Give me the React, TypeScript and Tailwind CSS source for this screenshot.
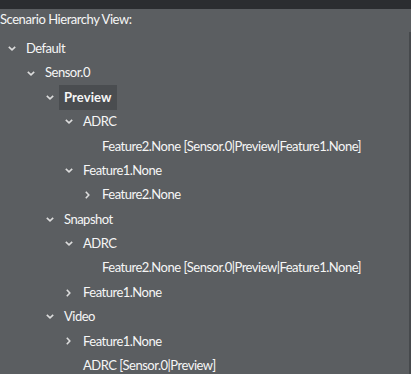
import React from "react";

type Node = {
  label: string;
  level: number;
  chevron?: "down" | "right";
  selected?: boolean;
};

const rows: Node[] = [
  { label: "Default", level: 0, chevron: "down" },
  { label: "Sensor.0", level: 1, chevron: "down" },
  { label: "Preview", level: 2, chevron: "down", selected: true },
  { label: "ADRC", level: 3, chevron: "down" },
  { label: "Feature2.None [Sensor.0|Preview|Feature1.None]", level: 4 },
  { label: "Feature1.None", level: 3, chevron: "down" },
  { label: "Feature2.None", level: 4, chevron: "right" },
  { label: "Snapshot", level: 2, chevron: "down" },
  { label: "ADRC", level: 3, chevron: "down" },
  { label: "Feature2.None [Sensor.0|Preview|Feature1.None]", level: 4 },
  { label: "Feature1.None", level: 3, chevron: "right" },
  { label: "Video", level: 2, chevron: "down" },
  { label: "Feature1.None", level: 3, chevron: "right" },
  { label: "ADRC [Sensor.0|Preview]", level: 3 },
];

const indent = ["pl-[0px]", "pl-[19px]", "pl-[38px]", "pl-[57px]", "pl-[76px]"];

function Chevron({ dir }: { dir: "down" | "right" }) {
  if (dir === "down") {
    return (
      <svg width="8" height="5" viewBox="0 0 8 5" className="block">
        <path d="M0.8 0.8 L4 3.8 L7.2 0.8" fill="none" stroke="#dcdcdc" strokeWidth="1.6" />
      </svg>
    );
  }
  return (
    <svg width="5" height="8" viewBox="0 0 5 8" className="block">
      <path d="M0.8 0.8 L3.8 4 L0.8 7.2" fill="none" stroke="#dcdcdc" strokeWidth="1.6" />
    </svg>
  );
}

export default function App() {
  return (
    <div
      className="w-[411px] h-[374px] overflow-hidden bg-[#5b5e61] text-[#f6f6f6] flex flex-col"
      style={{ fontFamily: 'Lato, "Open Sans", sans-serif' }}
    >
      <div className="h-[9px] bg-[#2b2d30] shrink-0" />
      <div className="h-[23px] shrink-0 text-[13px] leading-[20px] tracking-[-0.45px]">Scenario Hierarchy View:</div>
      <div className="flex-1 border-r-2 border-[#46494c] pt-[4.5px]">
        {rows.map((r, i) => (
          <div key={i} className={`h-[24.4px] flex items-center ${indent[r.level]}`}>
            <div className="w-[21px] h-full flex items-center pl-[8px] shrink-0">
              {r.chevron === "down" && <Chevron dir="down" />}
              {r.chevron === "right" && (
                <div className="pl-[1px]">
                  <Chevron dir="right" />
                </div>
              )}
            </div>
            <div
              className={`h-[25px] flex items-center px-[5px] text-[13px] whitespace-nowrap ${
                r.selected ? "bg-[#4a4d50] font-bold tracking-[0.1px]" : "tracking-[-0.5px]"
              }`}
            >
              {r.label}
            </div>
          </div>
        ))}
      </div>
    </div>
  );
}
